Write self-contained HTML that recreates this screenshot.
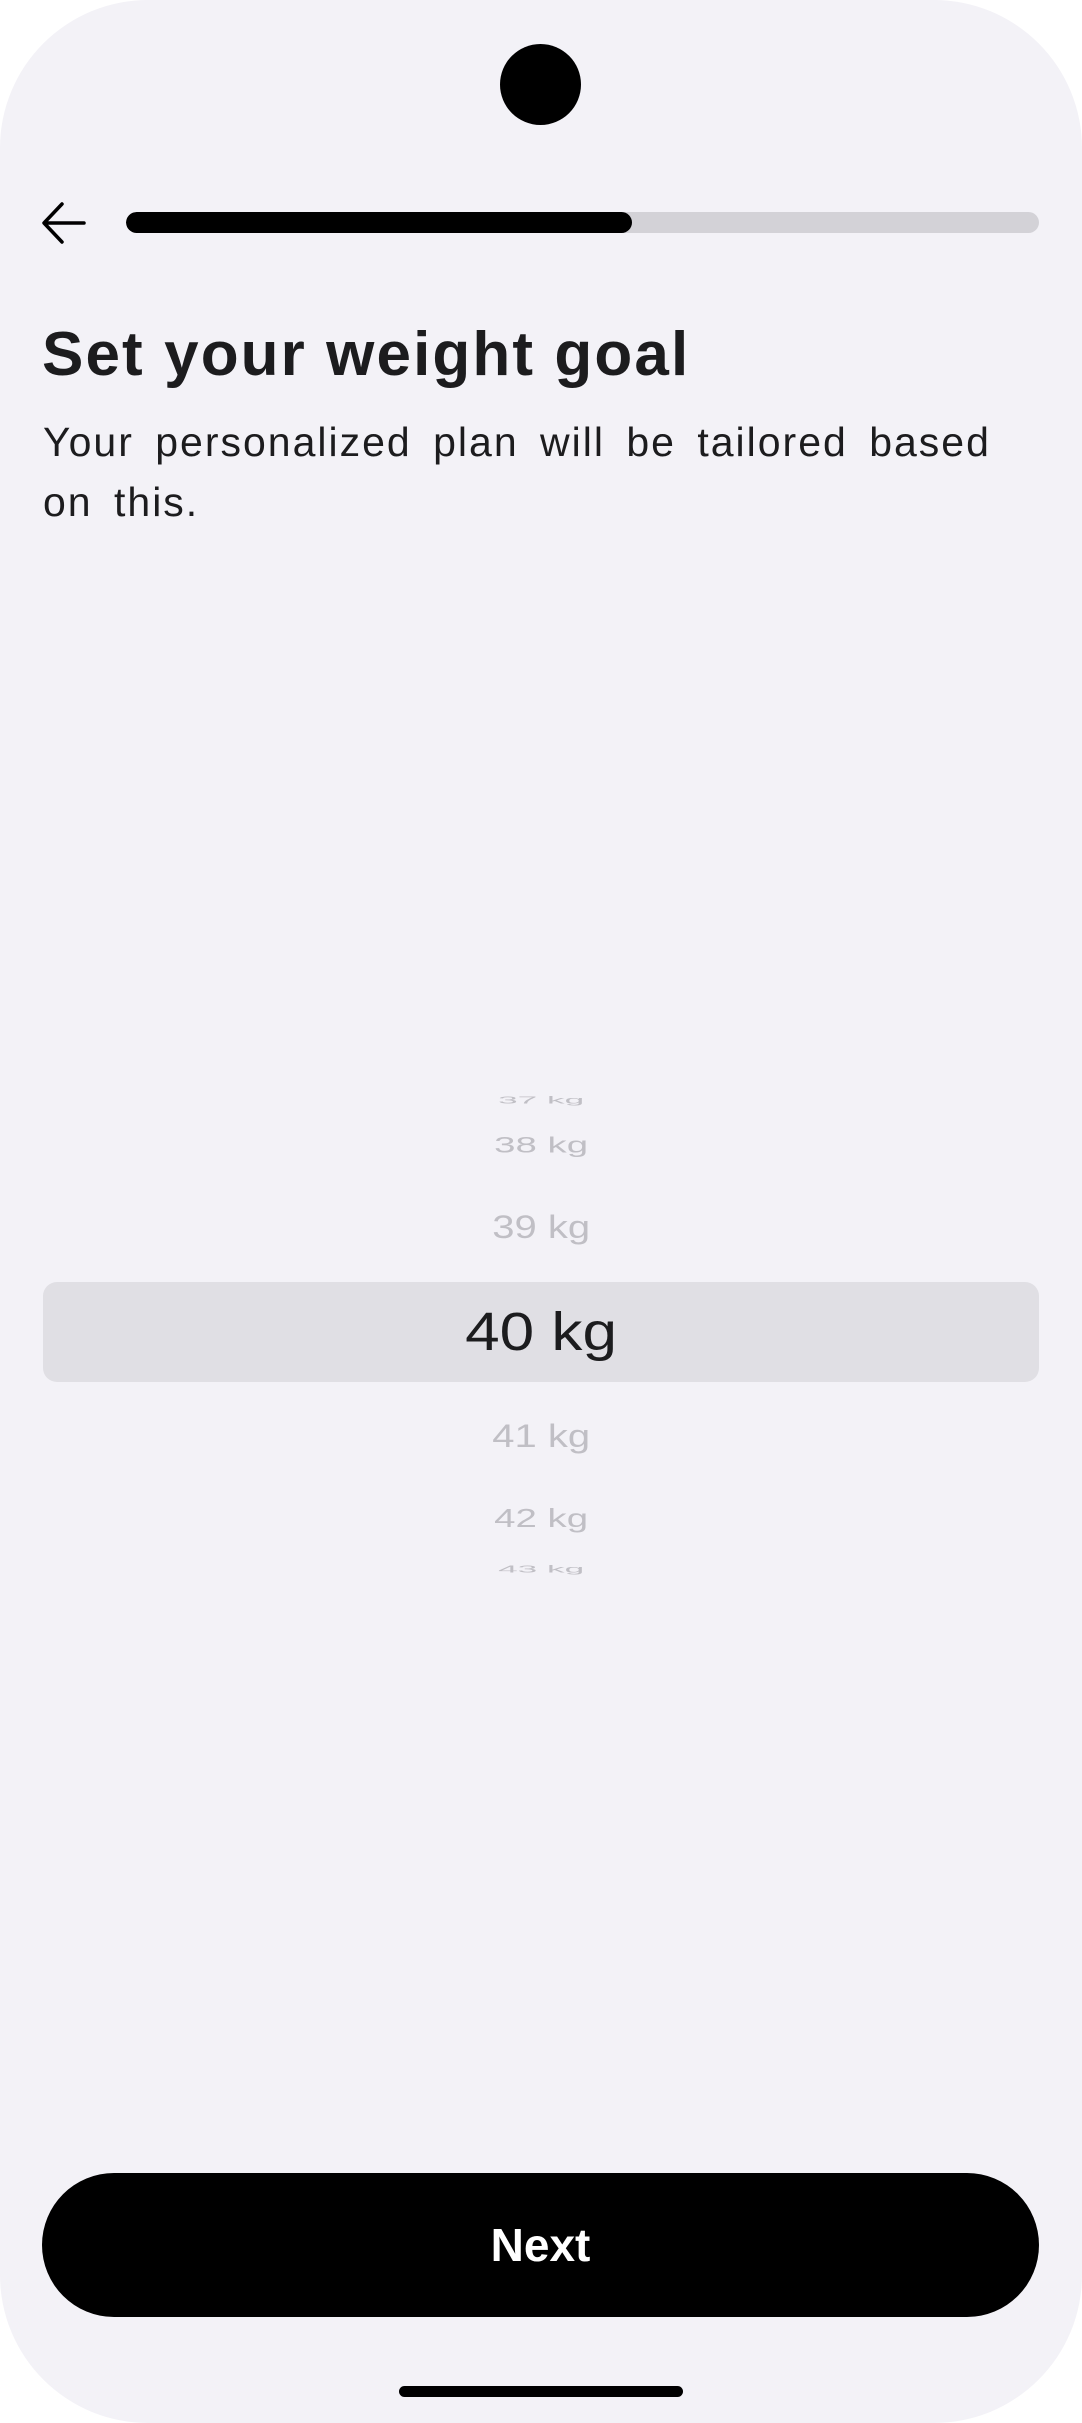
<!DOCTYPE html>
<html><head><meta charset="utf-8"><style>
html,body{margin:0;padding:0;background:#fff;}
body{width:1082px;height:2423px;position:relative;overflow:hidden;font-family:"Liberation Sans",sans-serif;}
.screen{position:absolute;left:0;top:0;width:1082px;height:2423px;background:#f3f2f7;border-radius:148px;}
.cam{position:absolute;left:500px;top:44px;width:81px;height:81px;border-radius:50%;background:#000;}
.bar{position:absolute;left:126px;top:212px;width:913px;height:21px;border-radius:11px;background:#d3d2d7;overflow:hidden;}
.fill{position:absolute;left:0;top:0;width:506px;height:21px;border-radius:11px;background:#000;}
h1{position:absolute;left:42px;top:319px;margin:0;font-size:62px;font-weight:bold;color:#1c1c1e;letter-spacing:2.1px;white-space:nowrap;}
.sub{position:absolute;left:43px;top:412px;margin:0;font-size:41px;line-height:60px;color:#1c1c1e;letter-spacing:2px;word-spacing:8px;width:1000px;}
.hl{position:absolute;left:43px;top:1282px;width:996px;height:100px;border-radius:14px;background:#e0dfe4;}
.it{position:absolute;left:0;width:1082px;text-align:center;font-size:32px;color:#c0bfc5;line-height:32px;white-space:nowrap;}
.it span{display:inline-block;}
.sel{position:absolute;left:0;width:1082px;text-align:center;font-size:54px;color:#1c1c1e;top:1305px;line-height:54px;}
.sel span{display:inline-block;transform:scaleX(1.15);}
.btn{position:absolute;left:42px;top:2173px;width:997px;height:144px;border-radius:72px;background:#000;color:#fff;text-align:center;line-height:144px;font-size:46px;font-weight:bold;}
.home{position:absolute;left:399px;top:2386px;width:284px;height:11px;border-radius:6px;background:#000;}
</style></head><body>
<div class="screen">
<div class="cam"></div>
<svg style="position:absolute;left:40px;top:200px" width="48" height="46" viewBox="0 0 48 46"><path d="M44 23H5M22 4L4 23L22 42" fill="none" stroke="#000" stroke-width="3.5" stroke-linecap="round" stroke-linejoin="round"/></svg>
<div class="bar"><div class="fill"></div></div>
<h1>Set your weight goal</h1>
<p class="sub">Your personalized plan will be tailored based on this.</p>
<div class="it" style="top:1084px"><span style="transform:scale(1.1,0.32)">37 kg</span></div>
<div class="it" style="top:1129px"><span style="transform:scale(1.2,0.68)">38 kg</span></div>
<div class="it" style="top:1211px"><span style="transform:scaleX(1.25)">39 kg</span></div>
<div class="hl"></div>
<div class="sel"><span>40 kg</span></div>
<div class="it" style="top:1420px"><span style="transform:scaleX(1.25)">41 kg</span></div>
<div class="it" style="top:1502px"><span style="transform:scale(1.2,0.82)">42 kg</span></div>
<div class="it" style="top:1553px"><span style="transform:scale(1.1,0.32)">43 kg</span></div>
<div class="btn">Next</div>
<div class="home"></div>
</div>
</body></html>
